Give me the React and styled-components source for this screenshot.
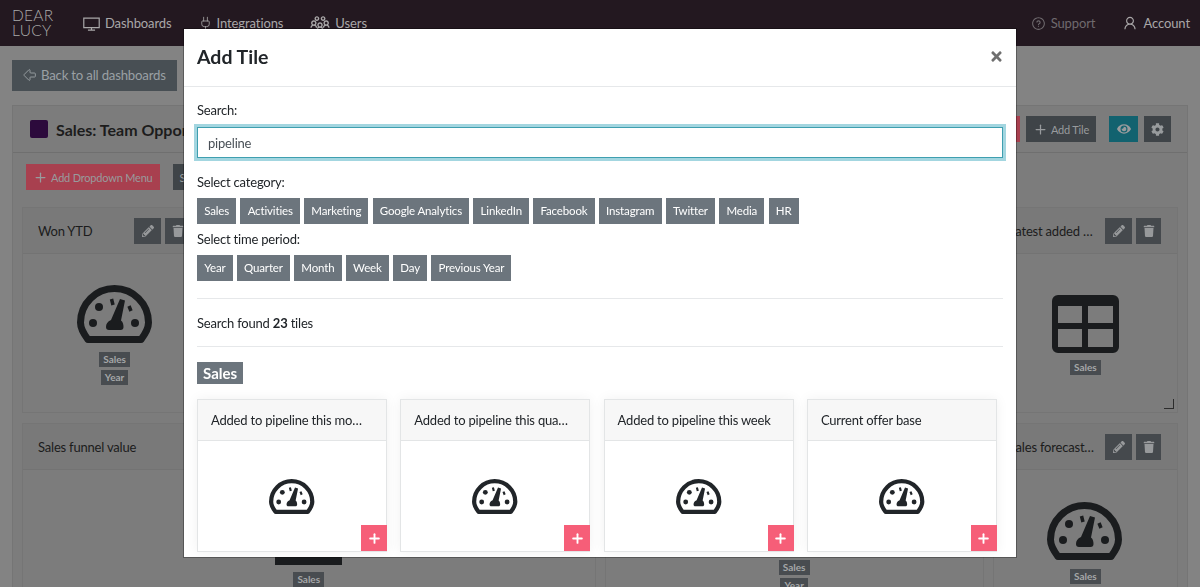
import React from 'react';
import styled, {createGlobalStyle} from 'styled-components';
import {ArrowBigLeft, Plug, Plus} from 'lucide-react';
import {FaPencilAlt, FaTrash, FaEye, FaCog, FaTimes} from 'react-icons/fa';
import {LiaDesktopSolid, LiaUsersSolid, LiaQuestionCircle, LiaUser} from 'react-icons/lia';

const GlobalStyle = createGlobalStyle`
    html, body {
        margin: 0;
        height: 100%;
        overflow: hidden;
    }
    body {
        font-family: Lato, "Noto Sans", sans-serif;
        font-size: 13px;
        letter-spacing: -0.2px;
        color: #212529;
    }
    * {
        box-sizing: border-box;
    }
`;

const categories = ['Sales', 'Activities', 'Marketing', 'Google Analytics', 'LinkedIn', 'Facebook', 'Instagram', 'Twitter', 'Media', 'HR'];
const periods = ['Year', 'Quarter', 'Month', 'Week', 'Day', 'Previous Year'];
const results = ['Added to pipeline this month', 'Added to pipeline this quarter', 'Added to pipeline this week', 'Current offer base'];

const Gauge = ({size}) => (
    <svg width={size} height={size * 0.79} viewBox="0 0 76 60">
        <path d="M11 54.500C6 48 3.500 43 3.500 37.500a34 34 0 0 1 68 0C71.500 43 69 48 64 54.500Z" fill="none" stroke="currentColor" strokeWidth="7" strokeLinejoin="round" />
        <circle cx="22" cy="22" r="4" fill="currentColor" />
        <circle cx="16" cy="38" r="4" fill="currentColor" />
        <circle cx="58" cy="38" r="4" fill="currentColor" />
        <path d="M34.500 14l1.500 6M52 21l2 5" stroke="currentColor" strokeWidth="3.500" fill="none" />
        <path d="M43 14l5 1.500-4 20c2 1.500 2.500 4 2.500 6.500 0 2-1 3-3 3H32c-2 0-3-1-3-3 0-3 1.500-5.500 5-7Z" fill="currentColor" />
    </svg>
);

const TableIcon = () => (
    <svg width="67" height="58" viewBox="0 0 67 58">
        <path fillRule="evenodd" fill="currentColor" d="M6 0h55a6 6 0 0 1 6 6v46a6 6 0 0 1-6 6H6a6 6 0 0 1-6-6V6a6 6 0 0 1 6-6ZM6 11v17h24V11ZM36 11v17h25V11ZM6 34v18h24V34ZM36 34v18h25V34Z" />
    </svg>
);

const ChartIcon = () => (
    <svg width="67" height="66" viewBox="0 0 67 66">
        <path fill="currentColor" d="M0 0h6v58h61v8H0Z" />
    </svg>
);

const TileActions = () => (
    <Actions>
        <IconButton><FaPencilAlt size={12} /></IconButton>
        <IconButton narrow><FaTrash size={12} /></IconButton>
    </Actions>
);

export default function App() {
    return (
        <>
            <GlobalStyle />
            <Page>
                <Navbar>
                    <Logo>DEAR<br />LUCY</Logo>
                    <NavLink><LiaDesktopSolid size={19} />Dashboards</NavLink>
                    <NavLink><Plug size={15} strokeWidth={1.3} />Integrations</NavLink>
                    <NavLink><LiaUsersSolid size={22} />Users</NavLink>
                    <NavRight>
                        <NavLink muted><LiaQuestionCircle size={17} />Support</NavLink>
                        <NavLink><LiaUser size={18} />Account</NavLink>
                    </NavRight>
                </Navbar>
                <Main>
                    <BackButton><ArrowBigLeft size={16} strokeWidth={1.4} />Back to all dashboards</BackButton>
                    <Panel>
                        <PanelHeader>
                            <Swatch />
                            <PanelTitle>Sales: Team Opportunities</PanelTitle>
                            <HeaderButtons>
                                <DarkButton tone="#a8404f">Delete</DarkButton>
                                <DarkButton><Plus size={15} />Add Tile</DarkButton>
                                <SquareButton tone="#12626f"><FaEye size={14} /></SquareButton>
                                <SquareButton narrow><FaCog size={13} /></SquareButton>
                            </HeaderButtons>
                        </PanelHeader>
                        <Toolbar>
                            <DarkButton tone="#a8404f"><Plus size={15} />Add Dropdown Menu</DarkButton>
                            <DarkButton>Settings</DarkButton>
                        </Toolbar>
                        <TileGrid>
                            <Tile>
                                <TileHeader><TileTitle>Won YTD</TileTitle><TileActions /></TileHeader>
                                <TileBody>
                                    <Gauge size={76} />
                                    <Labels><Label>Sales</Label><Label>Year</Label></Labels>
                                </TileBody>
                            </Tile>
                            <Tile span={4}>
                                <TileHeader><TileTitle>Won this month</TileTitle><TileActions /></TileHeader>
                            </Tile>
                            <Tile>
                                <TileHeader><TileTitle>Latest added deals</TileTitle><TileActions /></TileHeader>
                                <TileBody>
                                    <TableIcon />
                                    <Labels><Label>Sales</Label></Labels>
                                </TileBody>
                                <ResizeHandle />
                            </Tile>
                            <Tile span={3}>
                                <TileHeader><TileTitle>Sales funnel value</TileTitle><TileActions /></TileHeader>
                                <TileBody>
                                    <ChartIcon />
                                    <Labels><Label>Sales</Label></Labels>
                                </TileBody>
                            </Tile>
                            <Tile span={2}>
                                <TileHeader><TileTitle>Sales pipeline</TileTitle><TileActions /></TileHeader>
                                <TileBody>
                                    <Gauge size={76} />
                                    <Labels><Label>Sales</Label><Label>Year</Label></Labels>
                                </TileBody>
                            </Tile>
                            <Tile>
                                <TileHeader><TileTitle>Sales forecast this month</TileTitle><TileActions /></TileHeader>
                                <TileBody>
                                    <Gauge size={76} />
                                    <Labels><Label>Sales</Label></Labels>
                                </TileBody>
                            </Tile>
                        </TileGrid>
                    </Panel>
                </Main>
            </Page>
            <Modal>
                <ModalHeader>
                    <ModalTitle>Add Tile</ModalTitle>
                    <CloseButton><FaTimes size={15} /></CloseButton>
                </ModalHeader>
                <ModalBody>
                    <FieldLabel>Search:</FieldLabel>
                    <SearchInput defaultValue="pipeline" />
                    <FieldLabel>Select category:</FieldLabel>
                    <FilterRow>
                        {categories.map(name => <FilterButton key={name}>{name}</FilterButton>)}
                    </FilterRow>
                    <FieldLabel tight>Select time period:</FieldLabel>
                    <FilterRow>
                        {periods.map(name => <FilterButton key={name}>{name}</FilterButton>)}
                    </FilterRow>
                    <Divider />
                    <ResultCount>Search found <b>23</b> tiles</ResultCount>
                    <Divider />
                    <GroupBadge>Sales</GroupBadge>
                    <ResultGrid>
                        {results.map(name => (
                            <ResultCard key={name}>
                                <ResultHeader>{name}</ResultHeader>
                                <ResultBody>
                                    <Gauge size={46} />
                                    <AddButton><Plus size={15} strokeWidth={3} /></AddButton>
                                </ResultBody>
                            </ResultCard>
                        ))}
                    </ResultGrid>
                </ModalBody>
            </Modal>
        </>
    );
}

const Page = styled.div`
    height: 100vh;
    overflow: hidden;
    background-color: #838383;
`;

const Navbar = styled.div`
    height: 46px;
    display: flex;
    align-items: center;
    padding: 0 10px 0 12px;
    background-color: #231820;
`;

const Logo = styled.div`
    width: 70px;
    font-size: 15.5px;
    font-weight: 300;
    line-height: 15px;
    letter-spacing: 0.3px;
    color: #aaaaaa;
`;

const NavLink = styled.div`
    display: flex;
    align-items: center;
    gap: 4px;
    margin-right: 26px;
    font-size: 13px;
    letter-spacing: -0.1px;
    color: ${props => props.muted ? '#6f6a6e' : '#a9a7a8'};
`;

const NavRight = styled.div`
    margin-left: auto;
    display: flex;
    & > div {
        margin-right: 0;
        margin-left: 26px;
    }
`;

const Main = styled.div`
    padding: 14px 12px 0;
`;

const BackButton = styled.div`
    display: inline-flex;
    align-items: center;
    gap: 3px;
    height: 31px;
    padding: 0 11px 1px 10px;
    background-color: #484f54;
    color: #9aa0a4;
    font-size: 13.200px;
`;

const Panel = styled.div`
    margin-top: 14px;
    height: 600px;
    border: 1px solid #757575;
    background-color: #7c7c7c;
`;

const PanelHeader = styled.div`
    height: 47px;
    display: flex;
    align-items: center;
    padding: 0 16px 0 17px;
    border-bottom: 1px solid #6f6f6f;
`;

const Swatch = styled.div`
    width: 18px;
    height: 18px;
    border-radius: 2px;
    background-color: #2c0a3c;
`;

const PanelTitle = styled.div`
    margin-left: 8px;
    font-size: 16px;
    font-weight: 700;
    letter-spacing: 0;
    color: #1c1c1c;
`;

const HeaderButtons = styled.div`
    margin-left: auto;
    display: flex;
    align-items: center;
    gap: 6px;
`;

const DarkButton = styled.div`
    display: inline-flex;
    align-items: center;
    gap: 3px;
    height: 26px;
    padding: 0 7px;
    font-size: 11px;
    color: #989b9d;
    background-color: ${props => props.tone || '#3f4448'};
`;

const SquareButton = styled(DarkButton)`
    width: ${props => props.narrow ? '27px' : '29px'};
    justify-content: center;
    padding: 0;
    margin-left: ${props => props.narrow ? '0' : '7px'};
`;

const Toolbar = styled.div`
    display: flex;
    gap: 13px;
    padding: 11px 13px 0;
`;

const TileGrid = styled.div`
    display: grid;
    grid-template-columns: repeat(6, 1fr);
    grid-template-rows: 206px 190px;
    gap: 10px 9px;
    padding: 17px 9px 0;
`;

const Tile = styled.div`
    position: relative;
    grid-column: span ${props => props.span || 1};
    min-width: 0;
    display: flex;
    flex-direction: column;
    border: 1px solid #757575;
`;

const TileHeader = styled.div`
    height: 46px;
    flex-shrink: 0;
    display: flex;
    align-items: center;
    padding: 0 16px 0 15px;
    border-bottom: 1px solid #737373;
    background-color: #797979;
`;

const TileTitle = styled.div`
    flex: 1;
    min-width: 0;
    white-space: nowrap;
    overflow: hidden;
    text-overflow: ellipsis;
    color: #1c1c1c;
`;

const Actions = styled.div`
    display: flex;
    gap: 4px;
    margin-left: 8px;
    flex-shrink: 0;
`;

const IconButton = styled.div`
    width: ${props => props.narrow ? '25px' : '27px'};
    height: 26px;
    display: flex;
    align-items: center;
    justify-content: center;
    color: #97999b;
    background-color: #45494d;
`;

const TileBody = styled.div`
    flex: 1;
    display: flex;
    flex-direction: column;
    align-items: center;
    justify-content: center;
    padding-top: 4px;
    color: #1a1c1e;
`;

const Labels = styled.div`
    display: flex;
    flex-direction: column;
    align-items: center;
    gap: 3px;
    margin-top: 7px;
`;

const Label = styled.div`
    padding: 0 4px;
    height: 15px;
    line-height: 15px;
    font-size: 10px;
    font-weight: 700;
    letter-spacing: 0;
    color: #a5a7a8;
    background-color: #484c50;
`;

const ResizeHandle = styled.div`
    position: absolute;
    right: 3px;
    bottom: 3px;
    width: 10px;
    height: 10px;
    border-right: 1px solid #2c2c2c;
    border-bottom: 1px solid #2c2c2c;
`;

const Modal = styled.div`
    position: fixed;
    top: 29px;
    left: 184px;
    width: 832px;
    height: 528px;
    overflow: hidden;
    background-color: #fff;
    box-shadow: 0 0 0 1px rgba(0, 0, 0, 0.3);
`;

const ModalHeader = styled.div`
    height: 58px;
    display: flex;
    align-items: center;
    justify-content: space-between;
    padding: 0 13px 2px;
    border-bottom: 1px solid #e6e8ea;
`;

const ModalTitle = styled.div`
    font-size: 19.500px;
    font-weight: 700;
    letter-spacing: 0;
    color: #212529;
`;

const CloseButton = styled.div`
    display: flex;
    margin-right: -1px;
    color: #6f6f6f;
`;

const ModalBody = styled.div`
    padding: 14px 13px 0;
`;

const FieldLabel = styled.div`
    height: 19px;
    line-height: 19px;
    margin: ${props => props.tight ? '6px' : '0'} 0 6px;
    color: #212529;
`;

const SearchInput = styled.input`
    display: block;
    width: 100%;
    height: 31px;
    margin: 7px 0 15px;
    padding: 0 10px;
    border: 1px solid #3f9fb0;
    outline: none;
    box-shadow: 0 0 0 3px #a3d6e0;
    font: inherit;
    letter-spacing: inherit;
    color: #495057;
`;

const FilterRow = styled.div`
    display: flex;
    gap: 4.200px;
`;

const FilterButton = styled.div`
    height: 26px;
    line-height: 26px;
    padding: 0 7.200px;
    font-size: 11.500px;
    letter-spacing: -0.15px;
    color: #fff;
    background-color: #6c757d;
`;

const Divider = styled.div`
    height: 1px;
    background-color: #e6e8ea;
    margin-top: 17px;
`;

const ResultCount = styled.div`
    height: 47px;
    line-height: 48px;
    margin-bottom: -17px;
`;

const GroupBadge = styled.div`
    display: inline-block;
    margin-top: 15px;
    padding: 0 6px;
    height: 22px;
    line-height: 22px;
    font-size: 15px;
    font-weight: 700;
    letter-spacing: 0;
    color: #fff;
    background-color: #6c757d;
`;

const ResultGrid = styled.div`
    display: grid;
    grid-template-columns: repeat(4, 190px);
    gap: 13.300px;
    margin-top: 15px;
`;

const ResultCard = styled.div`
    border: 1px solid #e3e5e6;
    box-shadow: 0 0 12px rgba(0, 0, 0, 0.06);
`;

const ResultHeader = styled.div`
    height: 41px;
    line-height: 40px;
    padding: 0 18px 0 13px;
    white-space: nowrap;
    overflow: hidden;
    text-overflow: ellipsis;
    border-bottom: 1px solid #e3e5e6;
    background-color: #f7f7f7;
`;

const ResultBody = styled.div`
    position: relative;
    height: 110px;
    padding-top: 38px;
    display: flex;
    justify-content: center;
    color: #212529;
`;

const AddButton = styled.div`
    position: absolute;
    right: -1px;
    bottom: 0;
    width: 26px;
    height: 26px;
    display: flex;
    align-items: center;
    justify-content: center;
    color: #fff;
    background-color: #f65e78;
`;
